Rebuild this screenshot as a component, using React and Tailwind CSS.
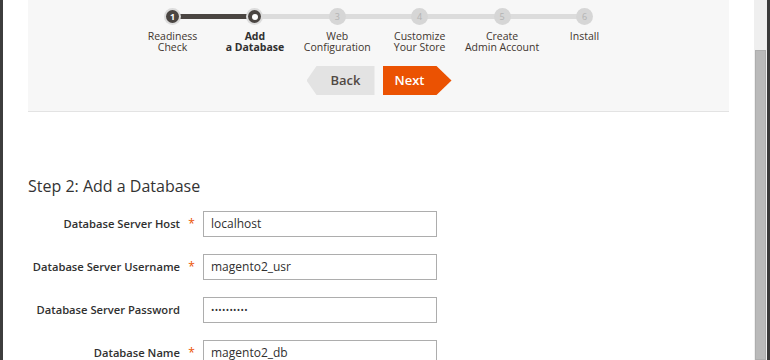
import React from 'react';

const steps = [
  { n: '1', l1: 'Readiness', l2: 'Check', state: 'done' },
  { n: '2', l1: 'Add', l2: 'a Database', state: 'active' },
  { n: '3', l1: 'Web', l2: 'Configuration', state: 'todo' },
  { n: '4', l1: 'Customize', l2: 'Your Store', state: 'todo' },
  { n: '5', l1: 'Create', l2: 'Admin Account', state: 'todo' },
  { n: '6', l1: 'Install', l2: '', state: 'todo' },
];

const fields = [
  { label: 'Database Server Host', required: true, value: 'localhost' },
  { label: 'Database Server Username', required: true, value: 'magento2_usr' },
  { label: 'Database Server Password', required: false, value: '••••••••••', secret: true },
  { label: 'Database Name', required: true, value: 'magento2_db' },
];

const StepDot = ({ step }) => {
  if (step.state === 'done') {
    return (
      <div className="w-[17px] h-[17px] rounded-full bg-[#dcdcdc] flex items-center justify-center">
        <div className="w-[13px] h-[13px] rounded-full bg-[#4a4542] flex items-center justify-center text-[9px] font-bold text-white leading-none">
          {step.n}
        </div>
      </div>
    );
  }
  if (step.state === 'active') {
    return (
      <div className="w-[17px] h-[17px] rounded-full bg-[#dcdcdc] flex items-center justify-center">
        <div className="w-[13px] h-[13px] rounded-full bg-[#4a4542] flex items-center justify-center">
          <div className="w-[6px] h-[6px] rounded-full bg-white" />
        </div>
      </div>
    );
  }
  return (
    <div className="w-[17px] h-[17px] rounded-full bg-[#d6d6d6] flex items-center justify-center text-[9px] text-[#b3b3b3] leading-none">
      {step.n}
    </div>
  );
};

export default function App() {
  return (
    <div className="w-[770px] h-[360px] overflow-hidden flex bg-white font-['Open_Sans',sans-serif] text-[#333]">
      {/* window edge */}
      <div className="w-[3px] bg-[#3d3d3d] shrink-0" />

      <div className="flex-1 px-[25px]">
        {/* wizard header */}
        <div className="h-[112px] bg-[#f7f7f7] border-b border-[#e3e3e3] pt-[8px] flex flex-col items-center">
          <div className="relative flex">
            <div className="absolute left-[41px] right-[41px] top-[6px] h-[5px] bg-[#dcdcdc]" />
            <div className="absolute left-[41px] w-[83px] top-[6px] h-[5px] bg-[#4a4542]" />
            {steps.map((s) => (
              <div key={s.n} className="relative w-[82.4px] flex flex-col items-center">
                <StepDot step={s} />
                <p
                  className={`mt-[6px] h-[22px] text-[10.5px] leading-[11px] text-center whitespace-nowrap ${
                    s.state === 'active' ? 'font-bold text-[#303030]' : 'text-[#41362f]'
                  }`}
                >
                  {s.l1}
                  {s.l2 && <br />}
                  {s.l2}
                </p>
              </div>
            ))}
          </div>

          <div className="flex gap-[8px] mt-[13px] ml-[1px]">
            <button className="h-[29px] w-[68px] bg-[#e3e3e3] text-[#514943] text-[13px] font-semibold pl-[10px] [clip-path:polygon(10px_0,100%_0,100%_100%,10px_100%,0_50%)]">
              Back
            </button>
            <button className="h-[29px] w-[69px] bg-[#eb5202] text-white text-[13px] font-semibold pr-[15px] [clip-path:polygon(0_0,calc(100%-15px)_0,100%_50%,calc(100%-15px)_100%,0_100%)]">
              Next
            </button>
          </div>
        </div>

        {/* form */}
        <h2 className="mt-[62px] text-[16px] leading-[24px] text-[#333]">Step 2: Add a Database</h2>

        <div className="mt-[13px] flex flex-col gap-[17px]">
          {fields.map((f) => (
            <div key={f.label} className="flex items-center">
              <div className="w-[152px] text-right text-[11.2px] font-semibold text-[#303030] whitespace-nowrap">{f.label}</div>
              <div className="w-[23px] text-center text-[12px] text-[#eb5202]">{f.required ? '*' : ''}</div>
              <div className="w-[234px] h-[26px] border border-[#adadad] bg-white px-[7px] flex items-center text-[12px] text-[#303030]">
                {f.secret ? <span className="text-[9px] tracking-[0.3px]">{f.value}</span> : f.value}
              </div>
            </div>
          ))}
        </div>
      </div>

      {/* scrollbar */}
      <div className="w-[13px] bg-[#efefef] shrink-0 flex flex-col pt-[50px] px-[1px]">
        <div className="flex-1 bg-[#bababa] border border-[#aeaeae]" />
      </div>
      <div className="w-[3px] bg-[#3a3a3a] shrink-0" />
    </div>
  );
}
